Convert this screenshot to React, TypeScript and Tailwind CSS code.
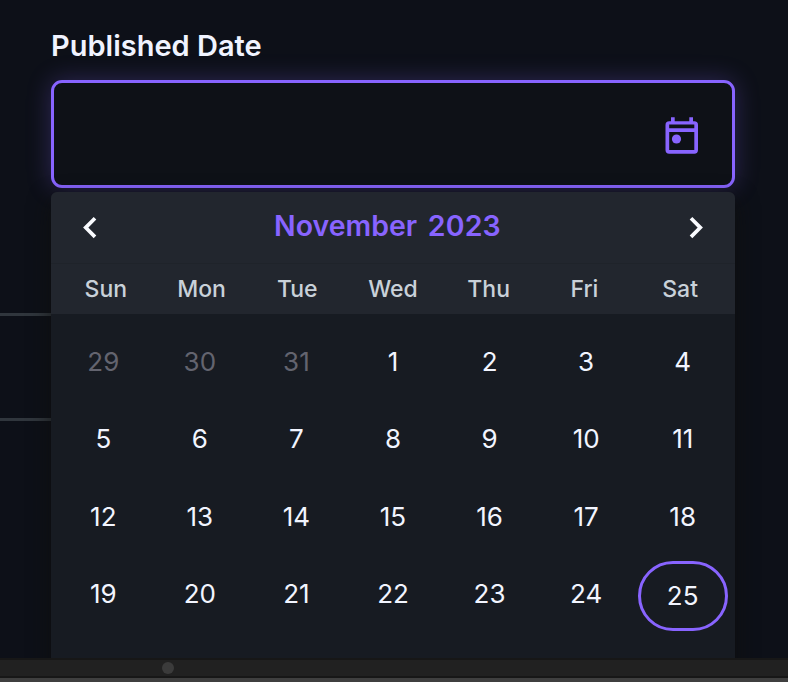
import React from "react";

const WEEKDAYS = ["Sun", "Mon", "Tue", "Wed", "Thu", "Fri", "Sat"];
const LEADING = [29, 30, 31];
const DAYS = Array.from({ length: 25 }, (_, i) => i + 1);
const TODAY = 25;

function CalendarIcon() {
  return (
    <svg width="34" height="38" viewBox="0 0 34 38" fill="none" aria-hidden="true">
      <path
        fill="#8864ff"
        fillRule="evenodd"
        d="M6 0.2h3.7v4h14.6v-4h3.7v4h1.3a3.7 3.7 0 0 1 3.7 3.7v25.1a3.7 3.7 0 0 1-3.7 3.7H4.2a3.7 3.7 0 0 1-3.7-3.7V7.9a3.7 3.7 0 0 1 3.7-3.7h1.8zM4.2 7.6v3.6h25.1V7.6zM4.2 14.9v18.2h25.1V14.9z"
      />
      <circle cx="11.5" cy="22" r="4.6" fill="#8864ff" />
    </svg>
  );
}

function Chevron({ next = false }: { next?: boolean }) {
  return (
    <svg width="16" height="24" viewBox="0 0 16 24" fill="none" aria-hidden="true">
      <path
        d={next ? "M3 2.3L12.3 11.6L3 20.9" : "M13 2.3L3.7 11.6L13 20.9"}
        stroke="#fafbff"
        strokeWidth="3.7"
      />
    </svg>
  );
}

function Field() {
  return (
    <div className="flex h-[108px] items-center justify-end rounded-[11px] border-[3px] border-[#8864ff] bg-[#0e1117] pr-[33px] pt-[3px] shadow-[0_0_24px_rgba(136,100,255,0.27)]">
      <button type="button" aria-label="Open calendar">
        <CalendarIcon />
      </button>
    </div>
  );
}

function Calendar() {
  return (
    <div className="mt-1 h-[520px] rounded-t-[6px] bg-[#171b22] shadow-[0_8px_22px_rgba(15,15,12,0.8)]">
      <div className="rounded-t-[6px] bg-[#22262e]">
        <div className="flex h-[71px] items-center justify-between px-[31px]">
          <button type="button" aria-label="Previous month">
            <Chevron />
          </button>
          <div className="flex items-center gap-[10.5px] pb-[2px] pr-[11px] text-[28.5px] font-semibold leading-none text-[#8864ff]">
            <span>November</span>
            <span className="pb-px tracking-[0.2px]">2023</span>
          </div>
          <button type="button" aria-label="Next month">
            <Chevron next />
          </button>
        </div>
        <div className="grid h-[51px] grid-cols-7 items-center border-t border-[#1f232a] px-[7px] text-center text-[23px] font-medium text-[#c9d1d9]">
          {WEEKDAYS.map((day) => (
            <span key={day}>{day}</span>
          ))}
        </div>
      </div>
      <div className="grid auto-rows-[77.3px] grid-cols-7 px-[4px] pt-[9px] text-[26px] font-normal text-[#f2f5ff]">
        {LEADING.map((day) => (
          <div key={`prev-${day}`} className="flex items-center justify-center text-[#63646f]">
            {day}
          </div>
        ))}
        {DAYS.map((day) => (
          <div key={day} className="flex items-center justify-center">
            {day === TODAY ? (
              <span className="mt-[4px] flex h-[70px] w-[90px] items-center justify-center rounded-full border-[3px] border-[#8864ff]">
                {day}
              </span>
            ) : (
              day
            )}
          </div>
        ))}
      </div>
    </div>
  );
}

export default function App() {
  return (
    <div className="flex h-[682px] w-[788px] flex-col overflow-hidden bg-[#0d1018] font-['Inter',sans-serif]">
      <main className="relative h-[658px] overflow-hidden pl-[51px] pr-[53px] pt-[30px]">
        <div className="absolute left-0 top-[313px] h-[108px] w-[120px] border-y-[3px] border-[#30363d]" />
        <div className="relative">
          <label className="mb-[18px] block h-8 text-[29px] font-semibold leading-8 text-[#f0f3ff]">
            Published Date
          </label>
          <Field />
          <Calendar />
        </div>
      </main>
      <footer className="h-5 border-y-2 border-[#171717] bg-[#212121] pl-[162px] pt-[2px]">
        <div className="size-3 rounded-full bg-[#3b3b3b]" />
      </footer>
      <div className="h-1 bg-[#3f3f3f]" />
    </div>
  );
}
